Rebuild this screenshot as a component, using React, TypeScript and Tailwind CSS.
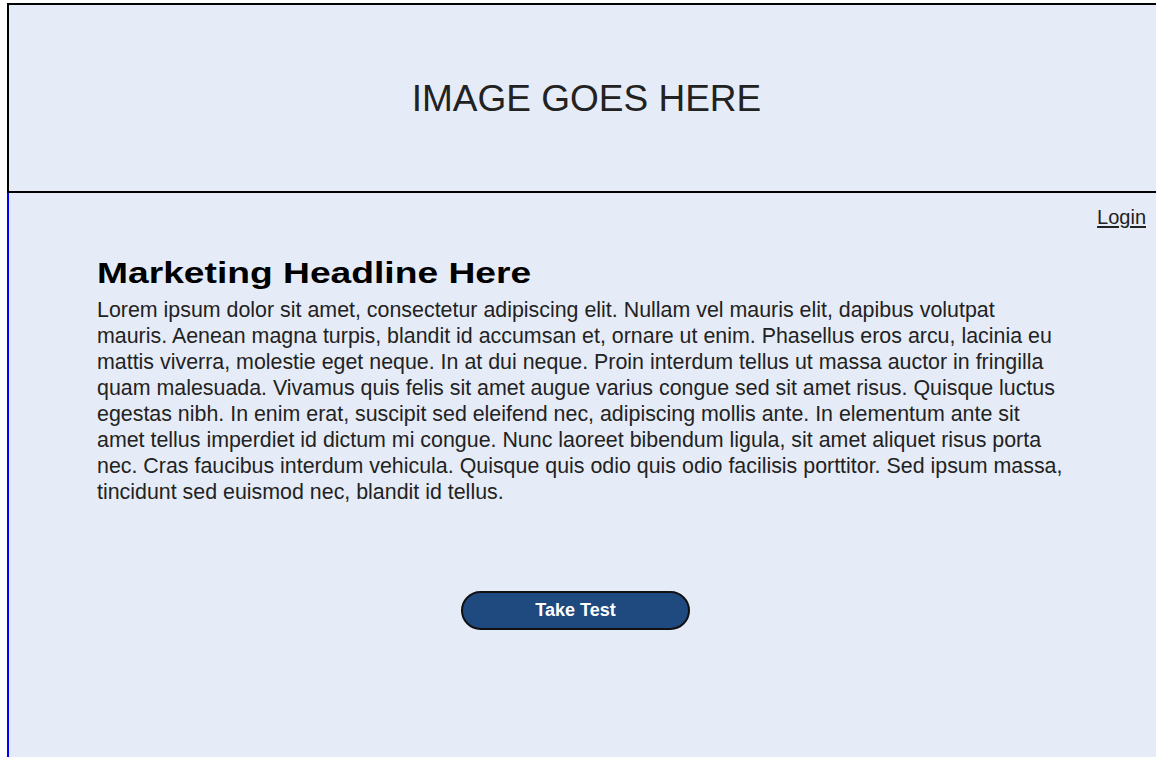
import React from 'react';

// copy is kept line by line so the paragraph wraps where the layout expects
const copyLines = [
  'Lorem ipsum dolor sit amet, consectetur adipiscing elit. Nullam vel mauris elit, dapibus volutpat',
  'mauris. Aenean magna turpis, blandit id accumsan et, ornare ut enim. Phasellus eros arcu, lacinia eu',
  'mattis viverra, molestie eget neque. In at dui neque. Proin interdum tellus ut massa auctor in fringilla',
  'quam malesuada. Vivamus quis felis sit amet augue varius congue sed sit amet risus. Quisque luctus',
  'egestas nibh. In enim erat, suscipit sed eleifend nec, adipiscing mollis ante. In elementum ante sit',
  'amet tellus imperdiet id dictum mi congue. Nunc laoreet bibendum ligula, sit amet aliquet risus porta',
  'nec. Cras faucibus interdum vehicula. Quisque quis odio quis odio facilisis porttitor. Sed ipsum massa,',
  'tincidunt sed euismod nec, blandit id tellus.',
];

export default function App() {
  return (
    <div
      className="flex h-[757px] w-[1156px] flex-col overflow-hidden bg-white pt-[3px] pl-[7px] text-[#222]"
      style={{ fontFamily: '"Liberation Sans", Arial, sans-serif' }}
    >
      {/* banner placeholder */}
      <div className="flex h-[190px] shrink-0 items-center justify-center border-t-2 border-b-2 border-l-2 border-black bg-[#e6ecf7] pl-[8px]">
        <span className="text-[37px] leading-none text-[#222]">IMAGE GOES HERE</span>
      </div>

      <div className="flex flex-1 flex-col border-l-2 border-[#0000ff] bg-[#e6ecf7]">
        <div className="flex justify-end pt-[14px] pr-[10px]">
          <a href="#" className="text-[20px] leading-5 text-[#222] underline underline-offset-2">
            Login
          </a>
        </div>

        <div className="pl-[88px] pt-[29px]">
          <h1 className="origin-left scale-x-[1.24] text-[30px] font-bold leading-[34px] text-black">
            Marketing Headline Here
          </h1>
          <p className="mt-[7px] whitespace-nowrap text-[21.4px] leading-[26px] text-[#222]">
            {copyLines.map((line, i) => (
              <span key={i} className="block">
                {line}
              </span>
            ))}
          </p>
        </div>

        <div className="pl-[452px] pt-[86px]">
          <button className="flex h-[39px] w-[229px] items-center justify-center rounded-full border-2 border-[#111] bg-[#1f4a80] text-[18px] font-bold text-white">
            Take Test
          </button>
        </div>
      </div>
    </div>
  );
}
